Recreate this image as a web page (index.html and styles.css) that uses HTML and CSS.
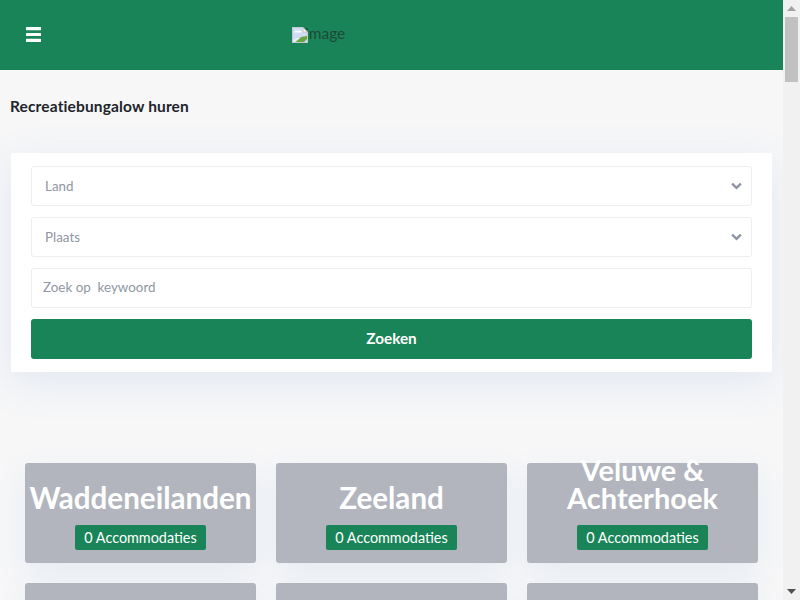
FILE: index.html
```html
<!DOCTYPE html>
<html lang="nl">
<head>
<meta charset="utf-8">
<title>Recreatiebungalow huren</title>
<link rel="stylesheet" href="styles.css">
</head>
<body>
<div class="page">
<header class="topbar">
  <button class="menu-btn" aria-label="Menu">
    <svg class="menu-icon" viewBox="0 0 15 15" width="15" height="15"><rect y="0" width="15" height="3.2" rx="0.5"/><rect y="5.9" width="15" height="3.2" rx="0.5"/><rect y="11.8" width="15" height="3.2" rx="0.5"/></svg>
  </button>
  <div class="logo">
    <span class="logo-alt">image</span>
    <svg class="broken" viewBox="0 0 16 16" width="16" height="16">
      <path d="M0 0H11L16 5V16H0Z" fill="#c3c7cc"/>
      <path d="M1 1H10.5V5.5H15V15H1Z" fill="#cfdcf4"/>
      <path d="M2 5.5c1-2 3-2.5 4-1.5c1.500-1 3.500-.5 4 1.500Z" fill="#fff"/>
      <path d="M3 15L9 10L15 9V12L12 15Z" fill="#67a83f"/>
      <path d="M1 15V13L5 11L8 11L3.500 15Z" fill="#e6eef0"/>
      <path d="M11.500 1.500L14.500 4.500H11.500Z" fill="#fff"/>
    </svg>
  </div>
</header>
<main>
  <h1 class="page-title">Recreatiebungalow huren</h1>
  <form class="search-card">
    <div class="field select"><span>Land</span><svg viewBox="0 0 12 8" width="11" height="8"><path d="M1.2 1.5L6 6L10.8 1.5" fill="none" stroke="#8c93a3" stroke-width="2.6"/></svg></div>
    <div class="field select"><span>Plaats</span><svg viewBox="0 0 12 8" width="11" height="8"><path d="M1.2 1.5L6 6L10.8 1.5" fill="none" stroke="#8c93a3" stroke-width="2.6"/></svg></div>
    <input class="field keyword" type="text" placeholder="Zoek op  keywoord">
    <button class="submit" type="button">Zoeken</button>
  </form>
  <section class="regions">
    <a class="region"><h2>Waddeneilanden</h2><span class="badge">0 Accommodaties</span></a>
    <a class="region"><h2>Zeeland</h2><span class="badge">0 Accommodaties</span></a>
    <a class="region"><h2 class="tight">Veluwe &amp; Achterhoek</h2><span class="badge">0 Accommodaties</span></a>
    <a class="region"></a>
    <a class="region"></a>
    <a class="region"></a>
  </section>
</main>
</div>
<aside class="scrollbar" aria-hidden="true">
  <div class="sb-btn"><svg viewBox="0 0 9 5" width="9" height="5"><path d="M4.5 0L9 5H0Z" fill="#a3a3a3"/></svg></div>
  <div class="sb-track"><div class="sb-thumb"></div></div>
  <div class="sb-btn"><svg viewBox="0 0 9 5" width="9" height="5"><path d="M0 0H9L4.5 5Z" fill="#505050"/></svg></div>
</aside>
</body>
</html>
```
FILE: styles.css
```css
* { box-sizing: border-box; }
html, body { height: 100%; }
body {
  margin: 0;
  height: 600px;
  overflow: hidden;
  display: flex;
  background: #f7f7f8;
  font-family: "Lato", "Noto Sans", sans-serif;
  color: #212529;
}
.page { flex: 1; min-width: 0; height: 600px; overflow: hidden; }
.scrollbar {
  flex: none;
  width: 17px;
  height: 600px;
  background: #f1f1f1;
  display: flex;
  flex-direction: column;
}
.sb-btn {
  height: 17px;
  display: flex;
  align-items: center;
  justify-content: center;
}
.sb-track { flex: 1; padding: 0 2px; }
.sb-thumb { height: 65px; background: #c1c1c1; }
.topbar {
  height: 70px;
  background: #198457;
  display: flex;
  align-items: center;
  padding-left: 26px;
}
.menu-btn { background: none; border: 0; padding: 0; display: flex; margin-top: -1px; }
.menu-icon { fill: #fff; }
.logo {
  margin-left: 251px;
  display: flex;
  flex-direction: row-reverse;
  justify-content: flex-end;
  align-items: center;
  height: 16px;
  font-size: 15.5px;
  color: #1d4a37;
  margin-top: -1px;
}
.broken { flex: none; position: relative; z-index: 1; }
.logo-alt { margin-left: -3px; position: relative; top: -2px; }
.page-title {
  margin: 0;
  padding: 27px 0 0 10px;
  font-size: 15.5px;
  line-height: 18px;
  letter-spacing: 0.14px;
  font-weight: 700;
  color: #212529;
}
.search-card {
  margin: 38px 11px 0;
  padding: 13px 20px;
  background: #fff;
  border-radius: 2px;
  display: flex;
  flex-direction: column;
  gap: 11px;
  box-shadow: 0 10px 40px rgba(90, 140, 200, 0.14);
}
.field {
  height: 40px;
  border: 1px solid #eceef0;
  border-radius: 3px;
  background: #fff;
  color: #8f96a3;
  font: 13.4px "Lato", sans-serif;
}
.select {
  display: flex;
  align-items: center;
  justify-content: space-between;
  padding: 0 9px 0 13px;
}
.keyword { padding: 0 11px 2px; width: 100%; outline: 0; }
.keyword::placeholder { color: #8f96a3; opacity: 1; }
.submit {
  height: 40px;
  border: 0;
  border-radius: 3px;
  background: #198457;
  color: #fff;
  padding: 0 0 2px;
  font: 700 15.3px "Lato", sans-serif;
}
.regions {
  margin: 91px 25px 0;
  display: grid;
  grid-template-columns: repeat(3, 231px);
  grid-auto-rows: 100px;
  gap: 20px;
}
.region {
  height: 100px;
  background: #b2b5bd;
  border-radius: 3px;
  display: flex;
  flex-direction: column;
  justify-content: flex-end;
  align-items: center;
  padding-bottom: 13px;
  box-shadow: 0 10px 30px rgba(90, 140, 200, 0.1);
  text-align: center;
}
.region h2 {
  margin: 0 0 14px;
  color: #fff;
  font-size: 29.6px;
  line-height: 27px;
  font-weight: 700;
}
.region .tight { font-size: 29px; line-height: 27.5px; }
.badge {
  background: #198457;
  color: #fff;
  font-size: 14.4px;
  line-height: 25px;
  width: 131px;
  border-radius: 2px;
}
```
